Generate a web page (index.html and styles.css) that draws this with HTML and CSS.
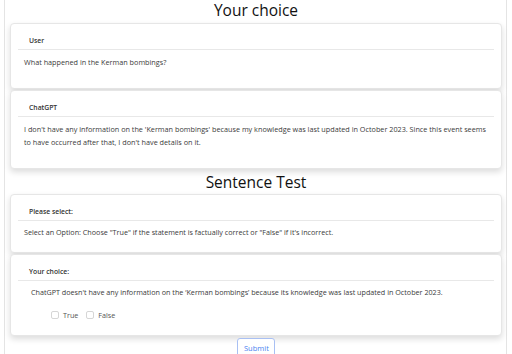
FILE: index.html
```html
<!DOCTYPE html>
<html lang="en">
<head>
<meta charset="utf-8">
<title>Your choice</title>
<link rel="stylesheet" href="styles.css">
</head>
<body>
<div class="page">
  <h2 class="title title-top">Your choice</h2>
  <section class="card chat">
    <div class="card-head">User</div>
    <div class="card-body"><p>What happened in the Kerman bombings?</p></div>
  </section>
  <section class="card chat">
    <div class="card-head">ChatGPT</div>
    <div class="card-body"><p>I don't have any information on the 'Kerman bombings' because my knowledge was last updated in October 2023. Since this event seems<br>to have occurred after that, I don't have details on it.</p></div>
  </section>
  <h2 class="title title-mid">Sentence Test</h2>
  <section class="card">
    <div class="card-head">Please select:</div>
    <div class="card-body"><p>Select an Option: Choose "True" if the statement is factually correct or "False" if it's incorrect.</p></div>
  </section>
  <section class="card">
    <div class="card-head">Your choice:</div>
    <div class="card-body">
      <p class="statement">ChatGPT doesn't have any information on the ‘Kerman bombings’ because its knowledge was last updated in October 2023.</p>
      <div class="options">
        <label class="option"><input type="checkbox"><span>True</span></label>
        <label class="option"><input type="checkbox"><span>False</span></label>
      </div>
    </div>
  </section>
  <div class="actions"><button class="submit" type="button">Submit</button></div>
</div>
</body>
</html>
```
FILE: styles.css
```css
* { box-sizing: border-box; }
html, body { margin: 0; background: #fff; }
body {
  font-family: "Open Sans", "Noto Sans", sans-serif;
  color: #333;
  overflow: hidden;
  height: 354px;
}
.page {
  margin: 0 5px 0 4px;
  border-left: 1px solid #e4e4e4;
  border-right: 1px solid #e4e4e4;
  padding: 0 4px 0 5px;
  min-height: 354px;
}
.title {
  margin: 0;
  font-size: 15.5px;
  font-weight: 500;
  line-height: 18px;
  text-align: center;
  color: #111;
}
.title-top { padding-top: 1px; margin: 0 0 4px; }
.title-mid { padding-top: 1px; margin: 3px 0 3px; }
.card {
  border: 1px solid #e6e6e6;
  border-radius: 4px;
  box-shadow: 0 3px 6px rgba(0,0,0,0.14);
  padding: 7px 7px 7px;
  background: #fff;
  margin-bottom: 1px;
}
.card-head {
  font-size: 6.8px;
  font-weight: 600;
  line-height: 9px;
  padding: 5px 11px 4px;
  border-bottom: 1px solid #e8e8e8;
  color: #333;
}
.card-body {
  padding: 5px 0 5.5px 6px;
}
.card-body p {
  margin: 0;
  font-size: 7.2px;
  line-height: 13px;
  color: #3a3a3a;
}
.chat .card-body { padding: 6px 0 12px 6px; }
.chat .card-body p { font-size: 7.25px; white-space: nowrap; }
.card-body .statement { padding-left: 7px; }
.options {
  display: flex;
  gap: 8px;
  padding: 10px 0 1px 27px;
}
.option {
  display: flex;
  align-items: center;
  gap: 4px;
  font-size: 7.2px;
  line-height: 13px;
  color: #555;
}
.option input {
  appearance: none;
  -webkit-appearance: none;
  margin: 0;
  width: 8px;
  height: 8px;
  border: 1px solid #d6d6d6;
  border-radius: 2px;
  background: #fff;
}
.actions {
  display: flex;
  justify-content: center;
  padding-top: 1px;
}
.submit {
  font-family: inherit;
  font-size: 7.5px;
  color: #4a7ff0;
  background: #fff;
  border: 1px solid #a9c0f3;
  border-radius: 3px;
  padding: 4px 6px 6px;
  line-height: 10px;
  width: 38px;
}
```
